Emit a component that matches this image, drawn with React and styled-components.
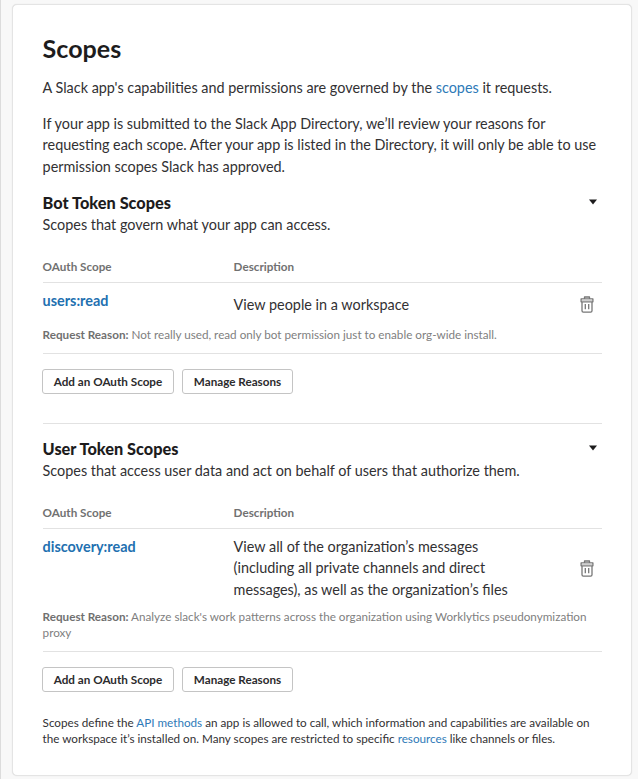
import React from 'react';
import styled, { createGlobalStyle } from 'styled-components';

const Global = createGlobalStyle`
  * { box-sizing: border-box; }
  body { margin: 0; background: #f8f8f8; font-family: Lato, sans-serif; color: #323133; }
  h1, h2, p { margin: 0; }
`;
const Page = styled.div`height: 779px; border-left: 1px solid #dcdcdc; padding: 4px 0 0 11px; overflow: hidden;`;
const Card = styled.main`
  width: 620px; height: 772px; padding: 30px 29px 0 29.6px;
  background: #fff; border: 1px solid #e4e4e4; border-radius: 5px;
  box-shadow: 0 0 1px rgba(0,0,0,.14);
`;
const Title = styled.h1`font-size: 25.1px; line-height: 26px; padding-bottom: 2px; font-weight: 700; color: #1d1c1d;`;
const Text = styled.p`font-size: 14.4px; line-height: 21.6px; margin-top: ${p => p.$gap || 0}px; white-space: nowrap;`;
const Link = styled.a`color: #2e7ab8; text-decoration: none;`;
const SectionHead = styled.div`display: flex; justify-content: space-between; align-items: center; height: 22px; padding-right: 4px; margin-top: ${p => p.$gap}px; svg { margin-bottom: 2px; }`;
const Heading = styled.h2`font-size: 16.3px; line-height: 22px; font-weight: 900; color: #1d1c1d;`;
const Columns = styled.div`
  display: grid; grid-template-columns: 191px 1fr; margin-top: 15px; height: 32px;
  border-bottom: 1px solid #e2e2e2; font-size: 11.68px; line-height: 30px; font-weight: 700; color: #717171;
`;
const Scope = styled.div`border-bottom: 1px solid #e2e2e2; height: ${p => p.$height}px;`;
const Row = styled.div`display: grid; grid-template-columns: 191px 1fr 24px; height: ${p => p.$height}px; padding: 7px 3px 0 0;`;
const Name = styled.a`font-size: 14.4px; line-height: 21px; font-weight: 700; color: #2270b0;`;
const Desc = styled.div`font-size: 14.4px; line-height: 21.6px; padding-top: ${p => p.$top}px; white-space: nowrap;`;
const Remove = styled.button`display: grid; justify-content: end; border: 0; background: none; padding: 0 5.5px 0 0; margin-top: ${p => p.$top}px; height: 18px; color: #777; svg { display: block; }`;
const Reason = styled.div`font-size: 11.7px; line-height: 16px; color: #808080; white-space: nowrap; b { color: #707070; }`;
const Buttons = styled.div`display: flex; gap: 8px; margin: 15px 0 0 -0.6px;`;
const Button = styled.button`
  width: ${p => p.$width}px; height: 25px; padding: 0 0 1px; border: 1px solid #c4c4c4; border-radius: 3px;
  background: #fff; color: #2c2b2d; font: 700 11.7px Lato, sans-serif;
`;
const Divider = styled.div`height: 1px; background: #e2e2e2; margin-top: 29px;`;
const Footer = styled.p`font-size: 11.69px; line-height: 16px; margin-top: 22px; white-space: nowrap;`;

const Caret = () => <svg width="10" height="6" viewBox="0 0 10 6"><path d="M1 .5h8L5 5.6z" fill="#1d1c1d" /></svg>;
const Trash = () => (
  <svg width="14" height="18" viewBox="0 0 14 18" fill="none" stroke="currentColor" strokeWidth="1.3" strokeLinejoin="round">
    <path d="M4.5 2.8V1h5v1.8M1.1 2.8h11.8v3H1.1zM2 5.8v9q0 1.3 1.3 1.3h7.4q1.3 0 1.3-1.3v-9M5.3 8v5.3M8.7 8v5.3" />
    <path d="M2 4.3h10" stroke="#cfcfcf" strokeWidth="1.5" />
  </svg>
);

function Section({ title, intro, name, desc, reason, gap, rowHeight, height, descTop, trashTop }) {
  return (
    <section>
      <SectionHead $gap={gap}><Heading>{title}</Heading><Caret /></SectionHead>
      <Text>{intro}</Text>
      <Columns><span>OAuth Scope</span><span>Description</span></Columns>
      <Scope $height={height}>
        <Row $height={rowHeight}>
          <Name>{name}</Name><Desc $top={descTop}>{desc}</Desc>
          <Remove $top={trashTop} aria-label="Remove scope"><Trash /></Remove>
        </Row>
        <Reason><b>Request Reason:</b> {reason}</Reason>
      </Scope>
      <Buttons><Button $width={132}>Add an OAuth Scope</Button><Button $width={111}>Manage Reasons</Button></Buttons>
    </section>
  );
}

export default function App() {
  return (
    <><Global />
      <Page><Card>
        <Title>Scopes</Title>
        <Text $gap={14}>A Slack app's capabilities and permissions are governed by the <Link>scopes</Link> it requests.</Text>
        <Text $gap={14}>If your app is submitted to the Slack App Directory, we’ll review your reasons for<br />requesting each scope. After your app is listed in the Directory, it will only be able to use<br />permission scopes Slack has approved.</Text>
        <Section title="Bot Token Scopes" intro="Scopes that govern what your app can access." gap={15}
          name="users:read" desc="View people in a workspace" rowHeight={43} height={71} descTop={4} trashTop={6}
          reason="Not really used, read only bot permission just to enable org-wide install." />
        <Divider />
        <Section title="User Token Scopes" intro="Scopes that access user data and act on behalf of users that authorize them." gap={14}
          name="discovery:read" desc={<>View all of the organization’s messages<br />(including all private channels and direct<br />messages), as well as the organization’s files</>}
          rowHeight={79} height={123} descTop={0} trashTop={24}
          reason={<>Analyze slack's work patterns across the organization using Worklytics pseudonymization<br />proxy</>} />
        <Footer>Scopes define the <Link>API methods</Link> an app is allowed to call, which information and capabilities are available on<br />the workspace it’s installed on. Many scopes are restricted to specific <Link>resources</Link> like channels or files.</Footer>
      </Card></Page>
    </>
  );
}
